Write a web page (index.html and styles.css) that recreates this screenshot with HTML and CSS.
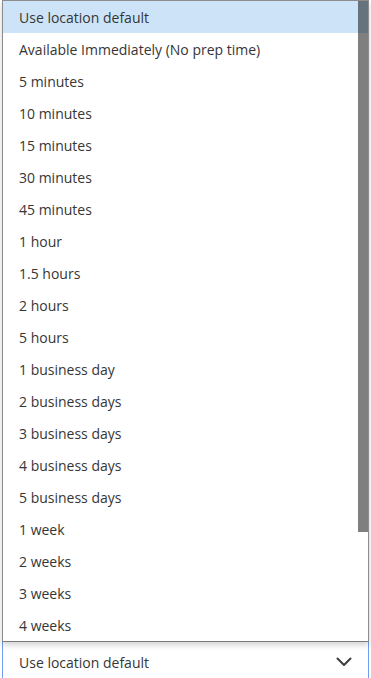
FILE: index.html
```html
<!DOCTYPE html>
<html lang="en">
<head>
  <meta charset="UTF-8">
  <title>Prep time</title>
  <link rel="stylesheet" href="styles.css">
</head>
<body>
  <div class="field">
    <ul class="listbox">
      <li class="option selected">Use location default</li>
      <li class="option">Available Immediately (No prep time)</li>
      <li class="option">5 minutes</li>
      <li class="option">10 minutes</li>
      <li class="option">15 minutes</li>
      <li class="option">30 minutes</li>
      <li class="option">45 minutes</li>
      <li class="option">1 hour</li>
      <li class="option">1.5 hours</li>
      <li class="option">2 hours</li>
      <li class="option">5 hours</li>
      <li class="option">1 business day</li>
      <li class="option">2 business days</li>
      <li class="option">3 business days</li>
      <li class="option">4 business days</li>
      <li class="option">5 business days</li>
      <li class="option">1 week</li>
      <li class="option">2 weeks</li>
      <li class="option">3 weeks</li>
      <li class="option">4 weeks</li>
      <li class="scroll-thumb"></li>
    </ul>

    <div class="select">
      <span>Use location default</span>
      <svg class="chevron" width="16" height="10" viewBox="0 0 16 10">
        <path d="M1.5 1.5 L8 8 L14.5 1.5" fill="none" stroke="#3d3d3d" stroke-width="2" stroke-linecap="round" stroke-linejoin="round"/>
      </svg>
    </div>
  </div>
</body>
</html>
```

FILE: styles.css
```css
/* base */
body {
  margin: 0;
  background-color: #fff;
  font-family: "Open Sans", "Liberation Sans", sans-serif;
  font-size: 14px;
  color: #363636;
  overflow: hidden;
}

.field {
  width: 367px;
  margin-left: 2px;
}

/* open popup list */
.listbox {
  position: relative;
  z-index: 2;
  list-style: none;
  margin: 0;
  padding: 0;
  background-color: #fff;
  border: 1px solid #8c8c8c;
  border-bottom-color: #7a7a7a;
  box-shadow: 0 3px 6px rgba(0, 0, 0, 0.18);
}

.option {
  box-sizing: border-box;
  height: 32px;
  padding-top: 2px;
  line-height: 30px;
  padding-left: 16px;
  white-space: nowrap;
}

.option.selected {
  background-color: #cde4f8;
}

.scroll-thumb {
  position: absolute;
  top: 0;
  right: 0;
  width: 10px;
  height: 531px;
  background-color: rgba(0, 0, 0, 0.5);
}

/* closed select under the popup */
.select {
  display: flex;
  align-items: center;
  justify-content: space-between;
  height: 40px;
  padding: 1px 16px 0 16px;
  border-left: 1px solid #6f9cf0;
  border-right: 1px solid #6f9cf0;
  background-color: #fff;
  margin-top: -1px;
}

.chevron {
  display: block;
}
```
